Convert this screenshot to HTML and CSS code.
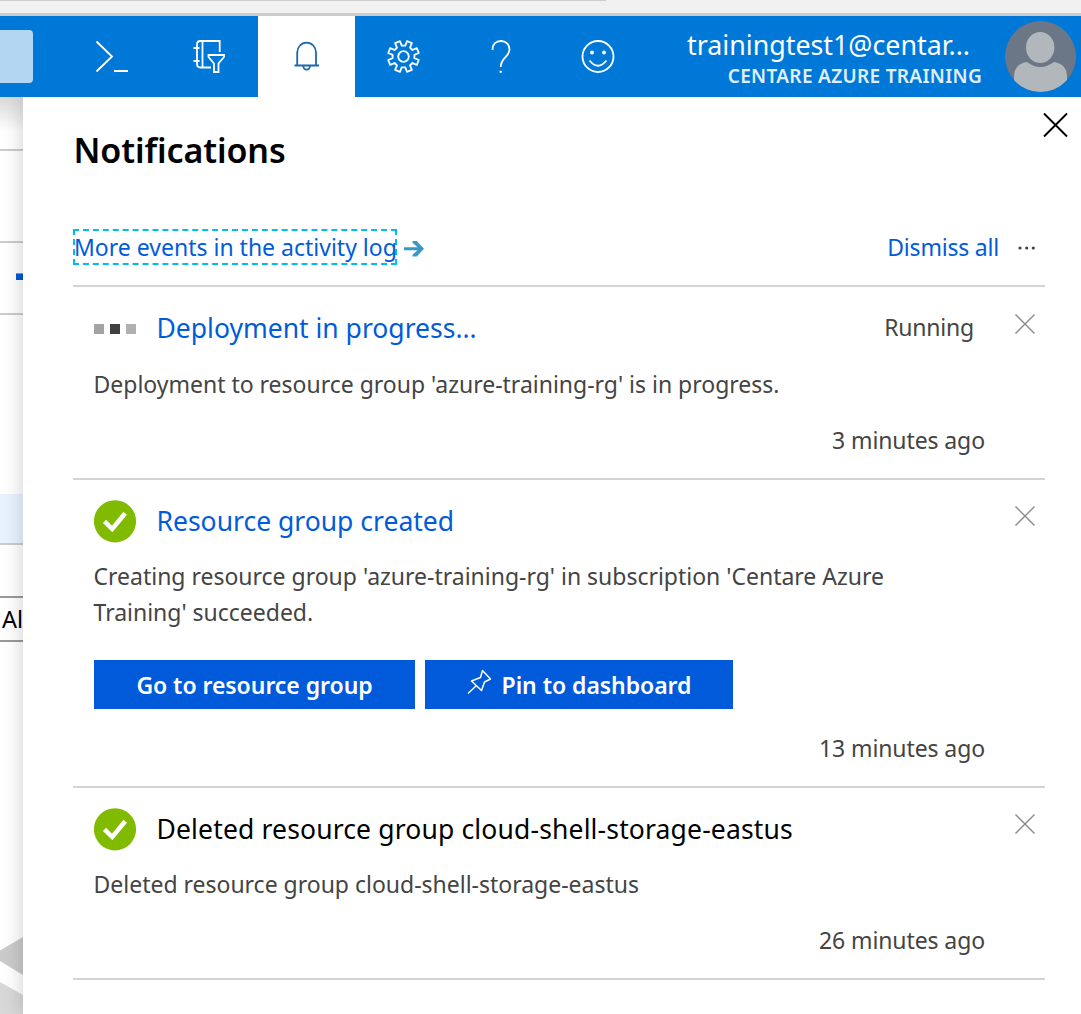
FILE: index.html
```html
<!DOCTYPE html>
<html lang="en">
<head>
<meta charset="utf-8">
<title>Notifications</title>
<link rel="stylesheet" href="styles.css">
</head>
<body>
<div class="chrome"><div class="chrome-line"></div></div>
<header class="topbar">
  <div class="search-end"></div>
  <nav class="tools">
    <button class="tool" aria-label="Cloud Shell"><svg width="97" height="81" viewBox="0 0 97 81" fill="none" stroke="#fff" stroke-width="1.8"><path d="M32.500 25.500 48 40.500 32.500 55.500"/><path d="M50 55h14" stroke-width="2"/></svg></button>
    <button class="tool" aria-label="Directory filter"><svg width="97" height="81" viewBox="0 0 97 81" fill="none" stroke="#fff" stroke-width="1.8"><path d="M58.700 36V25H39.500Q36 25 36 28.500V48Q36 51.500 39.500 51.500H50"/><path d="M41.500 25v26.500M32.500 32h6M32.500 45h6"/><path d="M47.500 39h15.500v2L57.500 47.500V56H53V47.500L47.500 41Z"/></svg></button>
    <button class="tool active" aria-label="Notifications"><svg width="97" height="81" viewBox="0 0 97 81" fill="none" stroke="#1a69ae" stroke-width="1.8"><path d="M36.500 49.500h24.500M39.200 49V36.500a9.400 9.900 0 0 1 18.800 0V49M45.300 50a3.300 3.700 0 0 0 6.600 0"/></svg></button>
    <button class="tool" aria-label="Settings"><svg width="97" height="81" viewBox="0 0 97 81" fill="none" stroke="#fff" stroke-width="1.8" stroke-linejoin="round"><circle cx="48.500" cy="40.500" r="5.300"/><path d="M46.700 29.600 45 25.200 40.100 27.200 42 31.600 39.600 34 35.200 32.100 33.200 37 37.600 38.800V42.200L33.200 44 35.200 48.900 39.600 47 42 49.400 40.100 53.800 45 55.800 46.700 51.400H50.300L52 55.800 56.900 53.800 55 49.400 57.400 47 61.800 48.900 63.800 44 59.400 42.200V38.800L63.800 37 61.800 32.100 57.400 34 55 31.600 56.900 27.200 52 25.200 50.300 29.600Z"/></svg></button>
    <button class="tool" aria-label="Help"><svg width="97" height="81" viewBox="0 0 97 81" fill="none" stroke="#fff" stroke-width="1.8"><path d="M40.500 34C40.500 28 44 25 49 25S57.500 28.500 57.500 33.500C57.500 41 48.700 41.500 48.700 51"/><path d="M47.600 55.800h2.200" stroke-width="2"/></svg></button>
    <button class="tool" aria-label="Feedback"><svg width="97" height="81" viewBox="0 0 97 81" fill="none" stroke="#fff" stroke-width="1.8"><circle cx="49" cy="40.500" r="15.500"/><path d="M40.500 44.500q8.500 10.500 17 0"/><circle cx="43" cy="36.500" r="2" fill="#fff" stroke="none"/><circle cx="55" cy="36.500" r="2" fill="#fff" stroke="none"/></svg></button>
  </nav>
  <div class="account">
    <div class="account-name">trainingtest1@centar...</div>
    <div class="account-dir">CENTARE AZURE TRAINING</div>
  </div>
  <svg class="avatar" width="71" height="71" viewBox="0 0 71 71"><defs><clipPath id="disc"><circle cx="35.500" cy="35.500" r="35.500"/></clipPath></defs><g clip-path="url(#disc)"><path fill="#6b7687" d="M0 0h71v71H0z"/><path fill="#b2b7bc" d="M9 71V56Q9 43 22 41Q35 51 49 41Q62 43 62 56V71Z"/><ellipse cx="35.200" cy="26.500" rx="14.200" ry="15.500" fill="#b2b7bc"/></g></svg>
</header>
<main class="stage">
  <div class="backdrop">
    <div class="strip strip-a"></div>
    <div class="strip strip-b"></div>
    <div class="strip strip-c"><div class="blue-mark"></div></div>
    <div class="strip-space"></div>
    <div class="strip strip-selected"></div>
    <div class="field">Al</div>
    <svg class="shapes" width="23" height="80" viewBox="0 0 23 80"><path fill="#cbcbcb" d="M23 3 0 16.500V27L23 41Z"/><path fill="#d8d8d8" d="M0 48 23 61V80H0Z"/></svg>
  </div>
  <section class="panel">
    <div class="panel-head">
      <h1>Notifications</h1>
      <button class="close" aria-label="Close"><svg width="26" height="26" viewBox="0 0 26 26"><path d="M1 1.500 24 24.500M24 1.500 1 24.500" stroke="#000" stroke-width="1.900"/></svg></button>
    </div>
    <div class="actions">
      <a class="log-link">More events in the activity log</a>
      <svg class="arrow" width="20" height="18" viewBox="0 0 20 18" fill="#3999c6"><path d="M0 7.200H13.500L8.500 2.700V1H12.800L20 8.700 12.800 16.500H8.500V14.800L13.500 10.200H0Z"/></svg>
      <a class="dismiss">Dismiss all</a>
      <svg class="more" width="18" height="4" viewBox="0 0 18 4" fill="#444"><circle cx="2" cy="2" r="1.600"/><circle cx="8.700" cy="2" r="1.600"/><circle cx="15.300" cy="2" r="1.600"/></svg>
    </div>
    <article class="item running">
      <div class="item-head">
        <span class="progress"><i></i><i></i><i></i></span>
        <h2 class="link">Deployment in progress...</h2>
        <span class="status">Running</span>
        <svg class="x" width="22" height="22" viewBox="0 0 22 22"><path d="M1.500 1.500 20.500 20.500M20.500 1.500 1.500 20.500"/></svg>
      </div>
      <p>Deployment to resource group 'azure-training-rg' is in progress.</p>
      <time>3 minutes ago</time>
    </article>
    <article class="item">
      <div class="item-head">
        <svg class="ok" width="43" height="43" viewBox="0 0 43 43"><circle cx="21" cy="21.300" r="21.100"/><path d="M10.500 21.300 18.200 29 31.200 13.200"/></svg>
        <h2 class="link">Resource group created</h2>
        <svg class="x" width="22" height="22" viewBox="0 0 22 22"><path d="M1.500 1.500 20.500 20.500M20.500 1.500 1.500 20.500"/></svg>
      </div>
      <p>Creating resource group 'azure-training-rg' in subscription 'Centare Azure<br>Training' succeeded.</p>
      <div class="buttons">
        <button class="btn go"><span>Go to resource group</span></button>
        <button class="btn pin"><svg width="26" height="26" viewBox="0 0 26 26" fill="none" stroke="#fff" stroke-width="1.500" stroke-linejoin="round"><path d="M15.500 1.500 23.500 10 17.500 13 14.500 21.500 4.500 12 13.500 8.500ZM9 17 1 24.500"/></svg><span>Pin to dashboard</span></button>
      </div>
      <time>13 minutes ago</time>
    </article>
    <article class="item">
      <div class="item-head">
        <svg class="ok" width="43" height="43" viewBox="0 0 43 43"><circle cx="21" cy="21.300" r="21.100"/><path d="M10.500 21.300 18.200 29 31.200 13.200"/></svg>
        <h2 class="wide">Deleted resource group cloud-shell-storage-eastus</h2>
        <svg class="x" width="22" height="22" viewBox="0 0 22 22"><path d="M1.500 1.500 20.500 20.500M20.500 1.500 1.500 20.500"/></svg>
      </div>
      <p>Deleted resource group cloud-shell-storage-eastus</p>
      <time>26 minutes ago</time>
    </article>
  </section>
</main>
</body>
</html>
```
FILE: styles.css
```css
* { box-sizing: border-box; }
body { margin: 0; height: 1014px; overflow: hidden; background: #fff; font-family: "Noto Sans", "Open Sans", sans-serif; font-size: 23px; color: #444; white-space: nowrap; }
h1, h2, p { margin: 0; font-weight: 400; }
button { border: 0; padding: 0; background: none; font: inherit; color: inherit; }
svg { display: block; flex: none; }

.chrome { height: 16px; background: #f1f1f1; border-bottom: 3px solid #ccc; }
.chrome-line { width: 606px; height: 1px; background: #ccc; }

.topbar { position: relative; z-index: 2; display: flex; align-items: center; height: 81px; background: #0078d7; color: #fff; }
.search-end { width: 33px; height: 53px; margin-right: 31px; border-radius: 0 4px 4px 0; background: #b3d6f3; }
.tools { display: flex; }
.tool { width: 97px; height: 81px; }
.tool.active { background: #fff; }
.account { flex: 1; padding: 5px 23px 0 0; text-align: right; }
.account-name { padding-right: 12px; font-size: 26.800px; line-height: 32px; }
.account-dir { margin-top: 2px; font-size: 19px; font-weight: 600; line-height: 26px; letter-spacing: .32px; color: #e0effa; }
.avatar { margin-right: 5px; }

.stage { display: flex; height: 917px; }
.backdrop { width: 23px; flex: none; overflow: hidden; background: linear-gradient(#d8d8d8, #fff 34px); }
.strip { border-bottom: 2px solid #ccc; }
.strip-a { height: 54px; }
.strip-b { height: 92px; }
.strip-c { height: 72px; padding-top: 30px; }
.blue-mark { width: 7px; height: 7px; margin-left: 16px; background: #0058d6; border-top: 1px solid #6fa4e6; }
.strip-space { height: 179px; }
.strip-selected { height: 51px; background: #e9f3ff; }
.field { height: 46px; margin-top: 51px; padding-left: 2px; border: solid #999; border-width: 2px 0; font-size: 23.500px; line-height: 43px; color: #000; }
.shapes { margin-top: 292px; }

.panel { position: relative; flex: 1; padding: 0 36px 0 50px; background: #fff; box-shadow: 0 0 20px rgba(0, 0, 0, .2); }
.panel-head { display: flex; justify-content: space-between; height: 124px; margin-right: -24px; }
h1 { padding: 29px 0 0 .500px; font-size: 34px; font-weight: 600; line-height: 48px; letter-spacing: -.1px; color: #000; }
.close { height: 26px; margin-top: 15px; }
.actions { display: flex; align-items: center; height: 66px; padding: 0 9px 12px 0; color: #015cda; border-bottom: 2px solid #d4d4d4; }
.log-link { width: 324px; height: 36px; border: 2px dashed #00bcf2; line-height: 32px; text-indent: -1px; }
.arrow { margin: 4px 0 0 7px; }
.dismiss { margin: 0 19px 0 auto; letter-spacing: -.2px; }
.more { margin-top: 2px; }

.item { padding: 20px 0 19px 21px; border-bottom: 2px solid #d4d4d4; }
.item.running { padding-top: 21px; }
.item-head { display: flex; align-items: center; height: 42px; margin-bottom: 16px; }
h2 { padding-left: 20px; margin-left: -.500px; font-size: 26.500px; line-height: 42px; color: #000; }
.running h2 { margin-top: -2px; }
.wide { letter-spacing: .15px; }
.link { color: #015cda; }
.ok { fill: #80ba01; }
.ok path { fill: none; stroke: #fff; stroke-width: 4.500; }
.progress { display: flex; gap: 6px; width: 43px; }
.progress i { width: 10px; height: 10px; background: #a3a3a3; }
.progress i:nth-child(2) { background: #404040; }
.progress i:nth-child(3) { background: #b0b0b0; }
.x { margin: 0 9px 11px auto; stroke: #8a8a8a; stroke-width: 1.400; }
.status { margin: -4px 0 0 auto; letter-spacing: -.2px; }
.status + .x { margin-left: 40px; }
p { margin-left: -.500px; line-height: 36px; letter-spacing: -.01px; }
time { display: block; height: 36px; margin-top: 20px; padding-right: 60px; text-align: right; line-height: 36px; letter-spacing: -.1px; }
.item time { margin-bottom: 1px; }
.buttons { display: flex; gap: 10px; margin: 30px 0 21px; }
.item .buttons + time { margin-top: 0; }
.btn { display: flex; align-items: center; justify-content: center; height: 49px; background: #005ad9; color: #fff; font-weight: 600; letter-spacing: -.05px; }
.go { width: 321px; }
.pin { width: 308px; gap: 9px; }
.pin svg { margin-bottom: 5px; }
```
